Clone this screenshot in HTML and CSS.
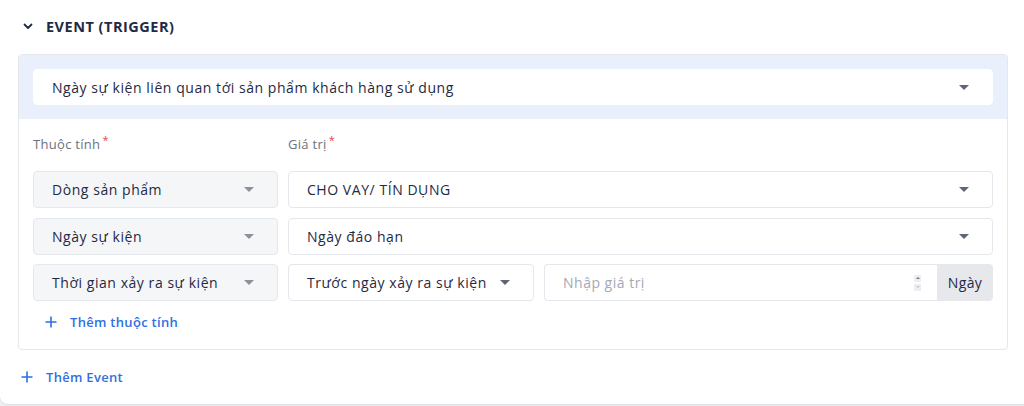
FILE: index.html
```html
<!DOCTYPE html>
<html lang="vi">
<head>
<meta charset="utf-8">
<link rel="stylesheet" href="styles.css">
</head>
<body>
<div class="card">
  <div class="section-head">
    <svg class="chev" width="12" height="8" viewBox="0 0 12 8"><path d="M2.5 2.5l3.5 3.5 3.5-3.5" fill="none" stroke="#1f2a44" stroke-width="1.8" stroke-linecap="round" stroke-linejoin="round"/></svg>
    <span class="section-title">EVENT (TRIGGER)</span>
  </div>
  <div class="event-box">
    <div class="event-top">
      <div class="select white">
        <span>Ngày sự kiện liên quan tới sản phẩm khách hàng sử dụng</span>
        <i class="caret"></i>
      </div>
    </div>
    <div class="event-body">
      <div class="labels">
        <div class="label col-left">Thuộc tính<sup>*</sup></div>
        <div class="label">Giá trị<sup>*</sup></div>
      </div>
      <div class="row">
        <div class="select gray col-left"><span>Dòng sản phẩm</span><i class="caret"></i></div>
        <div class="select white grow"><span>CHO VAY/ TÍN DỤNG</span><i class="caret"></i></div>
      </div>
      <div class="row">
        <div class="select gray col-left"><span>Ngày sự kiện</span><i class="caret"></i></div>
        <div class="select white grow"><span>Ngày đáo hạn</span><i class="caret"></i></div>
      </div>
      <div class="row">
        <div class="select gray col-left"><span>Thời gian xảy ra sự kiện</span><i class="caret"></i></div>
        <div class="select white col-mid"><span>Trước ngày xảy ra sự kiện</span><i class="caret"></i></div>
        <div class="input-group grow">
          <div class="input"><span class="placeholder">Nhập giá trị</span>
            <span class="spin"><i class="up"></i><i class="down"></i></span>
          </div>
          <div class="addon">Ngày</div>
        </div>
      </div>
      <div class="add-link inner"><svg class="plus" width="12" height="12" viewBox="0 0 12 12"><path d="M6 0.5v11M0.5 6h11" stroke="#2f6fe0" stroke-width="1.6"/></svg>Thêm thuộc tính</div>
    </div>
  </div>
  <div class="add-link outer"><svg class="plus" width="12" height="12" viewBox="0 0 12 12"><path d="M6 0.5v11M0.5 6h11" stroke="#2f6fe0" stroke-width="1.6"/></svg>Thêm Event</div>
</div>
</body>
</html>
```

FILE: styles.css
```css
* { box-sizing: border-box; }
html, body { margin: 0; padding: 0; }
body {
  background: #eef0f3;
  font-family: "Open Sans", "Noto Sans", sans-serif;
  color: #1f2a44;
  width: 1024px;
  height: 406px;
  overflow: hidden;
}
.card {
  background: #fff;
  width: 1040px;
  height: 404px;
  border-radius: 0 0 8px 8px;
  box-shadow: 0 1px 2px rgba(0,0,0,0.08);
  padding: 0 0 0 18px;
}
.section-head {
  height: 54px;
  display: flex;
  align-items: center;
  padding-left: 4px;
  padding-bottom: 2px;
}
.chev { margin-right: 12px; }
.section-title {
  font-weight: 700;
  font-size: 14.5px;
  letter-spacing: 0.5px;
  color: #1f2a44;
}
.event-box {
  width: 990px;
  border: 1px solid #e4e7ec;
  border-radius: 4px;
  overflow: hidden;
}
.event-top {
  background: #e9effb;
  padding: 14px;
}
.select {
  height: 36px;
  border-radius: 4px;
  display: flex;
  align-items: center;
  justify-content: space-between;
  padding: 0 23px 0 18px;
  font-size: 14px;
  letter-spacing: 0.55px;
  color: #1f2a44;
}
.select.white { background: #fff; border: 1px solid #e4e7ec; }
.event-top .select { border-color: #fff; }
.select.gray { background: #f5f6f8; border: 1px solid #e4e7ec; }
.caret {
  width: 0; height: 0;
  border-left: 5px solid transparent;
  border-right: 5px solid transparent;
  border-top: 5px solid #5d6577;
}
.select.gray .caret { border-top-color: #8a909c; }
.event-body {
  padding: 12px 14px 14px;
}
.labels { display: flex; gap: 10px; height: 26px; align-items: center; margin-bottom: 14px; }
.label { font-size: 13px; letter-spacing: 0.3px; color: #6b7280; }
.label sup { color: #e5484d; font-size: 11px; vertical-align: 0; position: relative; top: -5px; margin-left: 2px; }
.row { display: flex; gap: 10px; margin-bottom: 9.5px; }
.row .select { height: 37px; }
.col-left { width: 245px; flex: none; }
.col-mid { width: 246px; flex: none; }
.grow { flex: 1; }
.input-group { display: flex; height: 37px; }
.input {
  flex: 1;
  border: 1px solid #e4e7ec;
  border-right: none;
  border-radius: 4px 0 0 4px;
  display: flex;
  align-items: center;
  justify-content: space-between;
  padding: 0 16px 0 18px;
  font-size: 14px;
  letter-spacing: 0.5px;
}
.placeholder { color: #a3a9b5; }
.spin { display: flex; flex-direction: column; gap: 2px; }
.spin i { display: block; width: 7px; height: 7px; background: #eceef1; position: relative; }
.spin i::after {
  content: ""; position: absolute; left: 1.5px; width: 0; height: 0;
  border-left: 2px solid transparent; border-right: 2px solid transparent;
}
.spin .up::after { top: 2px; border-bottom: 2px solid #777; }
.spin .down::after { top: 2px; border-top: 2px solid #c3c6cc; }
.addon {
  width: 56px;
  background: #e6e8ec;
  border-radius: 0 4px 4px 0;
  display: flex;
  align-items: center;
  justify-content: center;
  font-size: 14px;
  letter-spacing: 0.4px;
  color: #1f2a44;
}
.add-link {
  display: flex;
  align-items: center;
  color: #2f6fe0;
  font-size: 13px;
  letter-spacing: 0.3px;
  font-weight: 600;
}
.plus { flex: none; margin-right: 13px; }
.add-link.inner { padding-left: 12px; height: 26px; margin-top: -2px; }
.add-link.outer { padding-left: 3px; height: 54px; }
```
